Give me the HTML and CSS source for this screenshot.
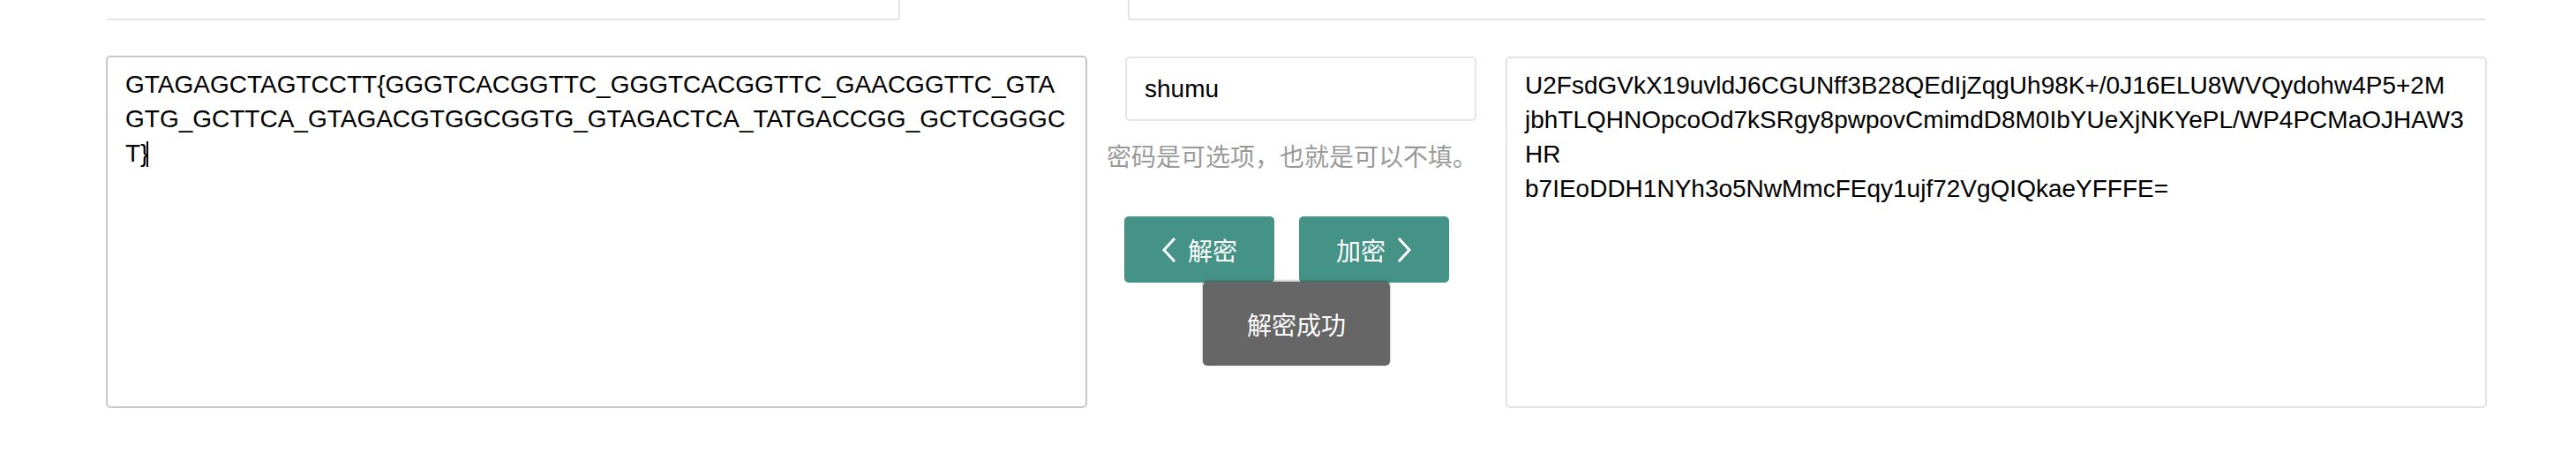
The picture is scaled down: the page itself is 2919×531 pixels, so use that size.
FILE: index.html
```html
<!DOCTYPE html>
<html lang="zh-CN">
<head>
<meta charset="utf-8">
<title>DNA 加密解密</title>
<link rel="stylesheet" href="styles.css">
</head>
<body>
<div class="page">
  <div class="prev-row">
    <div class="prev-box prev-left"></div>
    <div class="prev-box prev-right"></div>
  </div>
  <div class="main-row">
    <div class="textbox textbox-plain">GTAGAGCTAGTCCTT{GGGTCACGGTTC_GGGTCACGGTTC_GAACGGTTC_GTAGTG_GCTTCA_GTAGACGTGGCGGTG_GTAGACTCA_TATGACCGG_GCTCGGGCT}<span class="caret"></span></div>
    <div class="middle">
      <div class="pwd">shumu</div>
      <div class="hint">密码是可选项，也就是可以不填。</div>
      <div class="btns">
        <button class="btn">
          <svg class="chev" width="16" height="28" viewBox="0 0 16 28"><polyline points="14,2 3,14 14,26" fill="none" stroke="#fff" stroke-width="3" stroke-linecap="square"/></svg>
          <span>解密</span>
        </button>
        <button class="btn">
          <span>加密</span>
          <svg class="chev" width="16" height="28" viewBox="0 0 16 28"><polyline points="2,2 13,14 2,26" fill="none" stroke="#fff" stroke-width="3" stroke-linecap="square"/></svg>
        </button>
      </div>
      <div class="toast">解密成功</div>
    </div>
    <div class="textbox textbox-cipher">U2FsdGVkX19uvldJ6CGUNff3B28QEdIjZqgUh98K+/0J16ELU8WVQydohw4P5+2M
jbhTLQHNOpcoOd7kSRgy8pwpovCmimdD8M0IbYUeXjNKYePL/WP4PCMaOJHAW3HR
b7IEoDDH1NYh3o5NwMmcFEqy1ujf72VgQIQkaeYFFFE=</div>
  </div>
</div>
</body>
</html>
```

FILE: styles.css
```css
html, body {
  margin: 0;
  padding: 0;
  background: #fff;
}

body {
  font-family: "Liberation Sans", Arial, "Noto Sans CJK SC", sans-serif;
  font-size: 28px;
  color: #000;
}

.page {
  padding-left: 120px;
  width: 2698px;
}

.prev-row {
  display: flex;
  height: 23px;
}

.prev-box {
  box-sizing: border-box;
  height: 23px;
  border: 2px solid #e5e5e5;
  border-top: none;
  border-radius: 0 0 4px 4px;
}

.prev-left {
  width: 900px;
  border-left-color: transparent;
}

.prev-right {
  width: 1540px;
  margin-left: 258px;
  border-right-color: transparent;
}

.main-row {
  display: flex;
  align-items: flex-start;
  margin-top: 40px;
}

.textbox {
  box-sizing: border-box;
  width: 1112px;
  height: 399px;
  padding: 11px 20px;
  border: 2px solid #e3e3e3;
  border-radius: 5px;
  font-size: 28px;
  line-height: 39px;
  white-space: pre-wrap;
  overflow-wrap: anywhere;
  word-break: break-all;
  color: #000;
  overflow: hidden;
}

.textbox-plain {
  border-color: #c8c8c8;
}

.caret {
  display: inline-block;
  width: 2px;
  height: 29px;
  background: #000;
  vertical-align: -6px;
  margin-left: -2px;
}

.middle {
  position: relative;
  width: 474px;
  flex: none;
}

.pwd {
  box-sizing: border-box;
  width: 398px;
  height: 73px;
  margin: 1px 0 0 43px;
  padding: 0 20px;
  border: 2px solid #e5e5e5;
  border-radius: 5px;
  display: flex;
  align-items: center;
  font-size: 28px;
  color: #000;
}

.hint {
  margin: 19px 0 0 22px;
  font-family: "Noto Sans CJK SC", sans-serif;
  font-size: 28px;
  line-height: 40px;
  color: #9a9a9a;
  white-space: nowrap;
}

.btns {
  display: flex;
  gap: 28px;
  margin: 49px 0 0 42px;
}

.btn {
  box-sizing: border-box;
  width: 170px;
  height: 75px;
  border: none;
  border-radius: 5px;
  background: #459386;
  color: #fff;
  font-family: "Noto Sans CJK SC", sans-serif;
  font-size: 28px;
  display: flex;
  align-items: center;
  justify-content: center;
  gap: 14px;
  padding: 0;
}

.btn span {
  line-height: 1;
}

.chev {
  display: block;
}

.toast {
  position: absolute;
  left: 131px;
  top: 256px;
  width: 212px;
  height: 95px;
  background: #666;
  border-radius: 5px;
  box-shadow: 0 -1px 3px rgba(0, 0, 0, 0.35);
  color: #fff;
  font-family: "Noto Sans CJK SC", sans-serif;
  font-size: 28px;
  display: flex;
  align-items: center;
  justify-content: center;
}

.textbox-cipher {
  margin-top: 1px;
  height: 398px;
}
```
